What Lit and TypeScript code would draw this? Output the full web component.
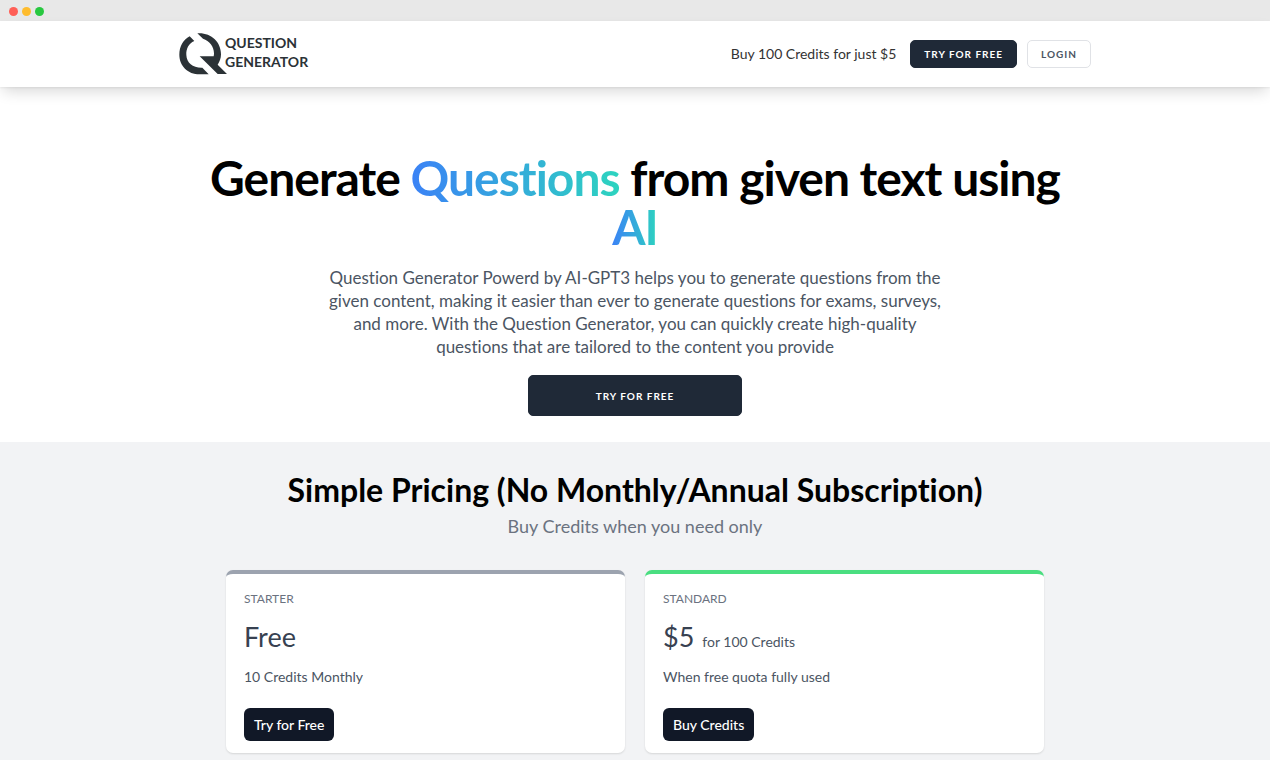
import { LitElement, html, css } from "lit";
import { customElement, property } from "lit/decorators.js";

@customElement("plan-card")
class PlanCard extends LitElement {
  @property() name = "";
  @property() price = "";
  @property() unit = "";
  @property() detail = "";
  @property() action = "";
  @property() tone = "grey";

  static styles = css`
    :host { display: block; min-width: 0; }
    .card {
      box-sizing: border-box;
      height: 100%;
      padding: 16px 18px 12px;
      border-top: 4px solid #9ca3af;
      border-radius: 7px;
      background: #fff;
      box-shadow: 0 1px 2px rgba(0, 0, 0, 0.12);
    }
    .green { border-top-color: #4ade80; }
    .name { margin: 0; font-size: 12px; line-height: 18px; font-weight: 400; color: #6b7280; }
    .price { display: flex; align-items: baseline; gap: 8px; margin: 12px 0 0; font-size: 27px; line-height: 34px; color: #374151; }
    .unit { font-size: 14px; line-height: 18px; color: #4b5563; }
    .detail { margin: 12px 0 20px; font-size: 14px; line-height: 22px; color: #4b5563; }
    .action {
      height: 33px;
      padding: 0 10px;
      border: 0;
      border-radius: 6px;
      background: #111827;
      color: #fff;
      font: 500 14px/22px Lato, sans-serif;
      cursor: pointer;
    }
  `;

  render() {
    return html`
      <article class="card ${this.tone}">
        <h3 class="name">${this.name}</h3>
        <p class="price">
          <span>${this.price}</span>${this.unit ? html`<span class="unit">${this.unit}</span>` : ""}
        </p>
        <p class="detail">${this.detail}</p>
        <button class="action" type="button">${this.action}</button>
      </article>
    `;
  }
}

@customElement("app-root")
class AppRoot extends LitElement {
  static styles = css`
    :host {
      display: flex;
      flex-direction: column;
      min-height: 100vh;
      background: #fff;
      color: #000;
      font-family: Lato, sans-serif;
      font-variant-ligatures: none;
    }
    .chrome { display: flex; align-items: center; gap: 4px; height: 21px; padding: 1px 9px 0; box-sizing: border-box; background: #e8e8e8; }
    .dot { width: 9px; height: 9px; border-radius: 50%; background: #ff5f57; }
    .amber { background: #febc2e; }
    .lime { background: #28c840; }
    .top { height: 66px; display: flex; box-shadow: 0 7px 14px -3px rgba(0, 0, 0, 0.16), 0 1px 2px rgba(0, 0, 0, 0.06); }
    .bar { display: flex; align-items: center; justify-content: space-between; width: 100%; max-width: 912px; margin: 0 auto; }
    .logo { display: flex; align-items: flex-start; color: #2b3236; text-decoration: none; }
    .mark { display: block; width: 48px; height: 42px; margin-right: -2px; }
    .word { font-size: 14px; line-height: 19px; font-weight: 700; }
    .nav { display: flex; align-items: center; gap: 10px; }
    .offer { margin-right: 4px; font-size: 14px; line-height: 20px; color: #333; }
    .btn {
      box-sizing: border-box;
      height: 28px;
      padding: 0 13px;
      border: 1px solid #1f2937;
      border-radius: 5px;
      background: #1f2937;
      color: #fff;
      font: 700 10px/14px Lato, sans-serif;
      letter-spacing: 1px;
      text-transform: uppercase;
      cursor: pointer;
    }
    .plain { border-color: #e0e2e6; background: #fff; color: #4b5563; }
    .wide { width: 214px; height: 41px; }
    .hero { display: flex; flex-direction: column; align-items: center; padding: 66px 24px 26px; text-align: center; }
    .title { max-width: 900px; margin: 0; font-size: 48px; line-height: 49px; font-weight: 700; letter-spacing: -1px; }
    .tint { display: inline-block; background: linear-gradient(to right, #3b82f6, #2dd4bf); -webkit-background-clip: text; background-clip: text; color: transparent; }
    .lead { max-width: 620px; margin: 15px 0 17px; font-size: 17px; line-height: 23px; color: #4b5563; }
    .pricing { flex: 1; padding: 28px 24px 8px; background: #f2f3f5; text-align: center; }
    .heading { margin: 0; font-size: 32px; line-height: 40px; font-weight: 700; }
    .sub { margin: 4px 0 32px; font-size: 18px; line-height: 24px; color: #6b7280; }
    .plans { display: grid; grid-template-columns: 1fr 1fr; gap: 20px; max-width: 818px; margin: 0 auto; text-align: left; }
  `;

  render() {
    return html`
      <div class="chrome" aria-hidden="true">
        <span class="dot"></span><span class="dot amber"></span><span class="dot lime"></span>
      </div>
      <header class="top">
        <div class="bar">
          <a class="logo" href="#">
            <svg class="mark" viewBox="30 32 144 126" fill="currentColor" aria-hidden="true">
              <path d="M62 42L76 56C58 64 51 80 52 98C53 122 72 137 100 136L119 156H92C56 156 31 130 31 97C31 73 42 52 62 42Z" />
              <path d="M85 33C125 30 156 58 156 96C156 108 152 118 146 127L174 155H146L92 102H134C139 78 124 56 102 49Z" />
            </svg>
            <span class="word">QUESTION<br />GENERATOR</span>
          </a>
          <nav class="nav">
            <span class="offer">Buy 100 Credits for just $5</span>
            <button class="btn" type="button">Try for free</button>
            <button class="btn plain" type="button">Login</button>
          </nav>
        </div>
      </header>
      <main class="hero">
        <h1 class="title">
          Generate <span class="tint">Questions</span> from given text using <span class="tint">AI</span>
        </h1>
        <p class="lead">
          Question Generator Powerd by AI-GPT3 helps you to generate questions from the given content, making it
          easier than ever to generate questions for exams, surveys, and more. With the Question Generator, you can
          quickly create high-quality questions that are tailored to the content you provide
        </p>
        <button class="btn wide" type="button">Try for free</button>
      </main>
      <section class="pricing">
        <h2 class="heading">Simple Pricing (No Monthly/Annual Subscription)</h2>
        <p class="sub">Buy Credits when you need only</p>
        <div class="plans">
          <plan-card name="STARTER" price="Free" detail="10 Credits Monthly" action="Try for Free"></plan-card>
          <plan-card name="STANDARD" price="$5" unit="for 100 Credits" detail="When free quota fully used" action="Buy Credits" tone="green"></plan-card>
        </div>
      </section>
    `;
  }
}
